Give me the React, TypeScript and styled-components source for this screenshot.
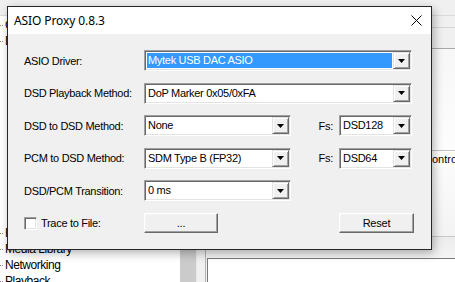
import styled, { createGlobalStyle } from 'styled-components'

const GlobalStyle = createGlobalStyle`
  html, body {
    margin: 0;
    padding: 0;
  }
  body {
    width: 455px;
    height: 282px;
    overflow: hidden;
    background: #f0f0f0;
    font-family: 'Liberation Sans', Arial, sans-serif;
  }
`

const Desktop = styled.div`
  position: relative;
  width: 455px;
  height: 282px;
  overflow: hidden;
  display: flex;
  flex-direction: column;
  background: #f0f0f0;
`

/* ---------- window behind the dialog ---------- */

const TopStrip = styled.div`
  height: 15px;
  flex: none;
  background: #f0f0f0;
  border-bottom: 1px solid #dadada;
`

const PrefsBody = styled.div`
  flex: 1;
  display: flex;
  min-height: 0;
`

const Tree = styled.ul`
  width: 180px;
  flex: none;
  margin: 0;
  padding: 1px 0 0;
  list-style: none;
  background: #fff;
  overflow: hidden;
`

const TreeItem = styled.li`
  position: relative;
  height: 16px;
  line-height: 16px;
  padding-left: 5px;
  font-family: 'Segoe UI', 'Liberation Sans', sans-serif;
  font-size: 12px;
  letter-spacing: -0.45px;
  color: #000;
  white-space: nowrap;

  &::before {
    content: '';
    position: absolute;
    left: 0;
    top: 8px;
    width: 3px;
    border-top: 1px dotted #8a8a8a;
  }
`

/* expanded sub-items of "Display", all covered by the dialog */
const TreeChildren = styled.li<{ $rows: number }>`
  height: ${({ $rows }) => `${$rows * 16}px`};
`

const ScrollTrack = styled.div`
  width: 16px;
  flex: none;
  background: #cbcbcb;
  border-right: 1px solid #e8e8e8;
`

const Gutter = styled.div`
  width: 8px;
  flex: none;
  background: #f0f0f0;
  border-right: 1px solid #b4b4b4;
`

const RightPane = styled.div`
  flex: 1;
  display: flex;
  flex-direction: column;
  background: #f0f0f0;
`

const PaneHeader = styled.div`
  height: 11px;
  flex: none;
  border-bottom: 1px solid #d4d4d4;
`

const PaneBand = styled.div`
  height: 20px;
  flex: none;
  border-bottom: 1px solid #a8a8a8;
`

const PaneList = styled.div`
  height: 101px;
  flex: none;
  background: linear-gradient(to bottom, #f7f7f7, #fdfdfd);
  border-bottom: 1px solid #c4c4c4;
`

const ListHeader = styled.div`
  display: flex;
  height: 16px;
  flex: none;
  background: #fff;
  font-size: 11px;
  line-height: 16px;
  color: #000;
`

const HeaderCell = styled.span<{ $w?: number }>`
  width: ${({ $w }) => ($w ? `${$w}px` : 'auto')};
  flex: ${({ $w }) => ($w ? 'none' : '1')};
  padding-left: 2px;
  white-space: nowrap;
`

const PaneFill = styled.div`
  height: 69px;
  flex: none;
  background: linear-gradient(to bottom, #fbfbfb, #f3f3f3);
  border-bottom: 1px solid #c8c8c8;
`

const PaneFooter = styled.div`
  height: 21px;
  flex: none;
  background: linear-gradient(to bottom, #ececec, #f4f4f4);
`

const PaneBox = styled.div`
  flex: 1;
  margin-left: 1px;
  background: #fff;
  border-top: 1px solid #7a7a7a;
  border-left: 1px solid #7a7a7a;
`

/* ---------- ASIO Proxy dialog ---------- */

const Dialog = styled.section`
  position: absolute;
  left: 7px;
  top: 6px;
  width: 425px;
  height: 244px;
  box-sizing: border-box;
  display: flex;
  flex-direction: column;
  background: #f0f0f0;
  border: 1px solid #262626;
  box-shadow: 2px 3px 9px rgba(0, 0, 0, 0.3);
`

const TitleBar = styled.header`
  height: 27px;
  flex: none;
  display: flex;
  align-items: center;
  justify-content: space-between;
  padding: 0 9px 0 6px;
  background: #fff;
`

const TitleText = styled.span`
  font-family: 'Segoe UI', 'Noto Sans', sans-serif;
  font-size: 12px;
  letter-spacing: -0.1px;
  color: #000;
`

const CloseButton = styled.button`
  width: 12px;
  height: 12px;
  padding: 0;
  border: 0;
  background: transparent;
  display: flex;
  align-items: center;
  justify-content: center;
`

const Form = styled.div`
  display: grid;
  grid-template-columns: 120px 147px 48px 73px;
  grid-auto-rows: 21px;
  row-gap: 11.6px;
  align-items: center;
  padding: 16px 0 0 16px;
`

const Label = styled.label`
  font-size: 11px;
  letter-spacing: -0.3px;
  color: #000;
  white-space: nowrap;
`

const FsLabel = styled(Label)`
  justify-self: end;
  padding-right: 6px;
`

const ComboBox = styled.div<{ $wide?: boolean }>`
  grid-column: ${({ $wide }) => ($wide ? '2 / 5' : 'auto')};
  height: 21px;
  box-sizing: border-box;
  display: flex;
  padding: 1px;
  background: #fff;
  border: 1px solid;
  border-color: #a0a0a0 #ffffff #ffffff #a0a0a0;
  box-shadow: inset 1px 1px #696969, inset -1px -1px #e3e3e3;
`

const ComboValue = styled.span<{ $selected?: boolean }>`
  flex: 1;
  min-width: 0;
  margin: ${({ $selected }) => ($selected ? '1px' : '0')};
  padding-left: ${({ $selected }) => ($selected ? '1px' : '2px')};
  font-size: 11px;
  letter-spacing: -0.3px;
  line-height: ${({ $selected }) => ($selected ? '15px' : '17px')};
  white-space: nowrap;
  overflow: hidden;
  color: ${({ $selected }) => ($selected ? '#fff' : '#000')};
  background: ${({ $selected }) => ($selected ? '#3399ff' : 'transparent')};
`

const DropButton = styled.span`
  width: 17px;
  height: 17px;
  flex: none;
  box-sizing: border-box;
  display: flex;
  align-items: center;
  justify-content: center;
  background: #f0f0f0;
  border: 1px solid;
  border-color: #e3e3e3 #696969 #696969 #e3e3e3;
  box-shadow: inset 1px 1px #fff, inset -1px -1px #a0a0a0;
`

const CheckRow = styled.div`
  display: flex;
  align-items: center;
  gap: 4px;
`

const CheckBox = styled.span`
  width: 13px;
  height: 13px;
  box-sizing: border-box;
  background: #fff;
  border: 1px solid;
  border-color: #a0a0a0 #fff #fff #a0a0a0;
  box-shadow: inset 1px 1px #696969, inset -1px -1px #e3e3e3;
`

const PushButton = styled.button<{ $w: number }>`
  width: ${({ $w }) => `${$w}px`};
  height: 20px;
  align-self: start;
  justify-self: start;
  box-sizing: border-box;
  padding: 0;
  background: #f0f0f0;
  border: 1px solid;
  border-color: #fff #696969 #696969 #fff;
  box-shadow: inset -1px -1px #a0a0a0, inset 1px 1px #f4f4f4;
  font-family: 'Liberation Sans', Arial, sans-serif;
  font-size: 11px;
  letter-spacing: -0.2px;
  color: #000;
`

const Arrow = () => (
  <svg width="7" height="4" viewBox="0 0 7 4">
    <polygon points="0,0 7,0 3.5,4" fill="#000" />
  </svg>
)

interface ComboProps {
  value: string
  wide?: boolean
  selected?: boolean
}

function Combo({ value, wide, selected }: ComboProps) {
  return (
    <ComboBox $wide={wide}>
      <ComboValue $selected={selected}>{value}</ComboValue>
      <DropButton>
        <Arrow />
      </DropButton>
    </ComboBox>
  )
}

export default function App() {
  return (
    <Desktop>
      <GlobalStyle />
      <TopStrip />
      <PrefsBody>
        <Tree>
          <TreeItem>Components</TreeItem>
          <TreeItem>Display</TreeItem>
          <TreeChildren $rows={11} />
          <TreeItem>Keyboard Shortcuts</TreeItem>
          <TreeItem>Media Library</TreeItem>
          <TreeItem>Networking</TreeItem>
          <TreeItem>Playback</TreeItem>
        </Tree>
        <ScrollTrack />
        <Gutter />
        <RightPane>
          <PaneHeader />
          <PaneBand />
          <PaneList />
          <ListHeader>
            <HeaderCell $w={214}>Name</HeaderCell>
            <HeaderCell>Control</HeaderCell>
          </ListHeader>
          <PaneFill />
          <PaneFooter />
          <PaneBox />
        </RightPane>
      </PrefsBody>

      <Dialog>
        <TitleBar>
          <TitleText>ASIO Proxy 0.8.3</TitleText>
          <CloseButton aria-label="Close">
            <svg width="11" height="11" viewBox="0 0 11 11">
              <path d="M0.5 0.5 L10.5 10.5 M10.5 0.5 L0.5 10.5" stroke="#000" strokeWidth="1" />
            </svg>
          </CloseButton>
        </TitleBar>
        <Form>
          <Label>ASIO Driver:</Label>
          <Combo value="Mytek USB DAC ASIO" wide selected />

          <Label>DSD Playback Method:</Label>
          <Combo value="DoP Marker 0x05/0xFA" wide />

          <Label>DSD to DSD Method:</Label>
          <Combo value="None" />
          <FsLabel>Fs:</FsLabel>
          <Combo value="DSD128" />

          <Label>PCM to DSD Method:</Label>
          <Combo value="SDM Type B (FP32)" />
          <FsLabel>Fs:</FsLabel>
          <Combo value="DSD64" />

          <Label>DSD/PCM Transition:</Label>
          <Combo value="0 ms" />
          <span />
          <span />

          <CheckRow>
            <CheckBox />
            <Label>Trace to File:</Label>
          </CheckRow>
          <PushButton $w={74}>...</PushButton>
          <span />
          <PushButton $w={75}>Reset</PushButton>
        </Form>
      </Dialog>
    </Desktop>
  )
}
